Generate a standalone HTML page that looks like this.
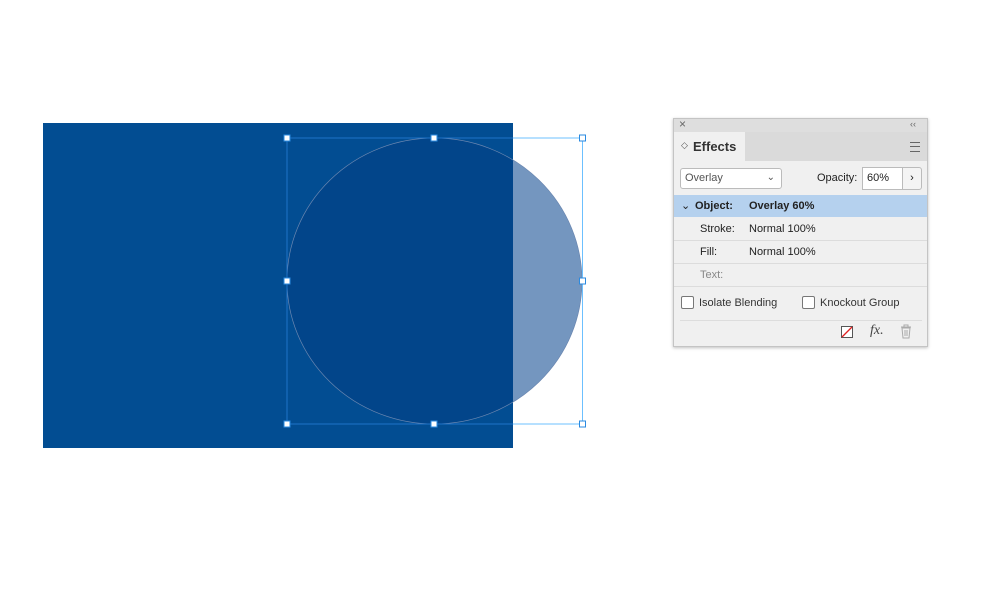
<!DOCTYPE html>
<html><head><style>
body{margin:0;width:999px;height:593px;background:#fff;position:relative;overflow:hidden;font-family:"Liberation Sans",sans-serif;}
.p{position:absolute;left:673px;top:118px;width:253px;height:227px;background:#f0f0f0;border:1px solid #c4c4c4;box-shadow:0 1px 3px rgba(0,0,0,.25);font-size:11px;color:#222}
.a{position:absolute}
.row{position:absolute;left:0;width:253px;height:22px;border-bottom:1px solid #dcdcdc;line-height:22px}
</style></head><body>
<svg class="a" style="left:0;top:0" width="999" height="593">
<defs><clipPath id="r"><rect x="43" y="123" width="470" height="325"/></clipPath></defs>
<rect x="43" y="123" width="470" height="325" fill="#024d92"/>
<ellipse cx="434.5" cy="281" rx="147.5" ry="143" fill="#7496bf"/>
<ellipse cx="434.5" cy="281" rx="147.5" ry="143" fill="#02458a" clip-path="url(#r)"/>
<ellipse cx="434.5" cy="281" rx="147.5" ry="143" fill="none" stroke="#6a86b0" stroke-width=".7"/>
<rect x="287" y="138" width="295.5" height="286" fill="none" stroke="#6cc0ff" stroke-width="1"/>
<path d="M513 138H287V424H513" fill="none" stroke="#1f73c8" stroke-width="1"/>
<g fill="#fff" stroke="#2a8ae0" stroke-width="1">
<rect x="284" y="135" width="6" height="6"/><rect x="431" y="135" width="6" height="6"/><rect x="579.5" y="135" width="6" height="6"/>
<rect x="284" y="278" width="6" height="6"/><rect x="579.5" y="278" width="6" height="6"/>
<rect x="284" y="421" width="6" height="6"/><rect x="431" y="421" width="6" height="6"/><rect x="579.5" y="421" width="6" height="6"/>
</g></svg>
<div class="p">
<div class="a" style="left:0;top:0;width:253px;height:13px;background:#dedede"></div>
<div class="a" style="left:5px;top:-2px;font-size:12px;color:#666">×</div>
<div class="a" style="left:236px;top:0;font-size:9px;color:#666">‹‹</div>
<div class="a" style="left:0;top:13px;width:253px;height:29px;background:#dadada"></div>
<div class="a" style="left:0;top:13px;width:71px;height:30px;background:#f0f0f0"></div>
<div class="a" style="left:7px;top:21px;font-size:9px;color:#555">◇</div>
<div class="a" style="left:19px;top:20px;font-size:13px;font-weight:bold;color:#333">Effects</div>
<div class="a" style="left:236px;top:23px;width:10px;height:8px;border-top:1px solid #666;border-bottom:1px solid #666"><div style="border-top:1px solid #666;margin-top:3px"></div></div>
<div class="a" style="left:6px;top:49px;width:96px;height:19px;background:#fff;border:1px solid #bbb;border-radius:3px;line-height:19px;padding-left:4px;color:#555">Overlay<span style="position:absolute;right:6px;top:-1px;font-size:10px">⌄</span></div>
<div class="a" style="left:143px;top:53px">Opacity:</div>
<div class="a" style="left:188px;top:48px;width:36px;height:21px;background:#fff;border:1px solid #bbb;line-height:21px;padding-left:4px">60%</div>
<div class="a" style="left:228px;top:48px;width:18px;height:21px;border:1px solid #bbb;border-radius:0 3px 3px 0;text-align:center;line-height:21px;background:#f4f4f4">›</div>
<div class="row" style="top:76px;background:#b5d1ee;font-weight:bold;border:0"><span class="a" style="left:7px;font-weight:normal">⌄</span><span class="a" style="left:21px">Object:</span><span class="a" style="left:75px">Overlay 60%</span></div>
<div class="row" style="top:99px"><span class="a" style="left:26px">Stroke:</span><span class="a" style="left:75px">Normal 100%</span></div>
<div class="row" style="top:122px"><span class="a" style="left:26px">Fill:</span><span class="a" style="left:75px">Normal 100%</span></div>
<div class="row" style="top:145px;color:#888"><span class="a" style="left:26px">Text:</span></div>
<div class="a" style="left:7px;top:177px;width:11px;height:11px;border:1px solid #777;border-radius:2px;background:#fff"></div>
<div class="a" style="left:25px;top:178px;color:#333">Isolate Blending</div>
<div class="a" style="left:128px;top:177px;width:11px;height:11px;border:1px solid #777;border-radius:2px;background:#fff"></div>
<div class="a" style="left:146px;top:178px;color:#333">Knockout Group</div>
<div class="a" style="left:6px;top:201px;width:242px;border-top:1px solid #ddd"></div>
<svg class="a" style="left:166px;top:206px" width="14" height="14"><rect x="1.5" y="1.5" width="11" height="11" fill="#fff" stroke="#555"/><line x1="2" y1="12" x2="12" y2="2" stroke="#e02020" stroke-width="1.3"/></svg>
<div class="a" style="left:196px;top:204px;font-family:'Liberation Serif',serif;font-style:italic;font-size:14px;color:#444">fx.</div>
<svg class="a" style="left:226px;top:205px" width="12" height="15"><path d="M1 3h10M4 3V1h4v2M2 4h8l-1 10H3z" fill="none" stroke="#aaa"/><path d="M5 6v6M7 6v6" stroke="#aaa"/></svg>
</div>
</body></html>
